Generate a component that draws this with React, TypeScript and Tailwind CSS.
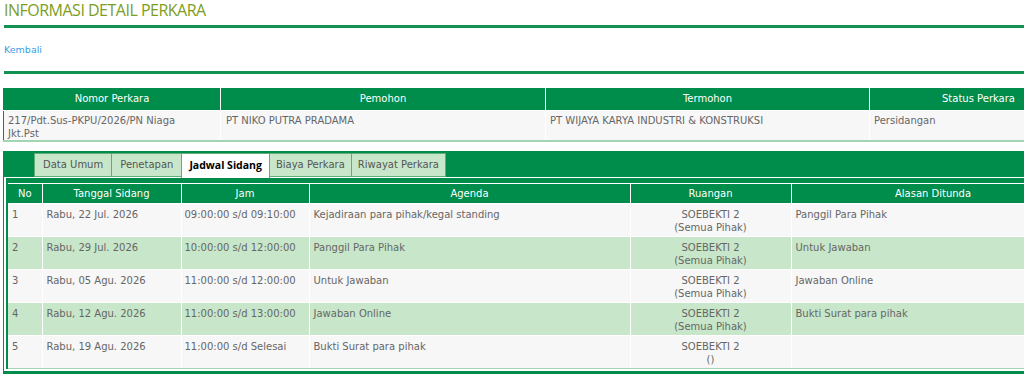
import React from "react";

const infoHeaders = ["Nomor Perkara", "Pemohon", "Termohon", "Status Perkara"];

const tabs = [
  { label: "Data Umum", active: false },
  { label: "Penetapan", active: false },
  { label: "Jadwal Sidang", active: true },
  { label: "Biaya Perkara", active: false },
  { label: "Riwayat Perkara", active: false },
];

const jadwal = [
  {
    no: "1",
    tanggal: "Rabu, 22 Jul. 2026",
    jam: "09:00:00 s/d 09:10:00",
    agenda: "Kejadiraan para pihak/kegal standing",
    ruang: "(Semua Pihak)",
    alasan: "Panggil Para Pihak",
  },
  {
    no: "2",
    tanggal: "Rabu, 29 Jul. 2026",
    jam: "10:00:00 s/d 12:00:00",
    agenda: "Panggil Para Pihak",
    ruang: "(Semua Pihak)",
    alasan: "Untuk Jawaban",
  },
  {
    no: "3",
    tanggal: "Rabu, 05 Agu. 2026",
    jam: "11:00:00 s/d 12:00:00",
    agenda: "Untuk Jawaban",
    ruang: "(Semua Pihak)",
    alasan: "Jawaban Online",
  },
  {
    no: "4",
    tanggal: "Rabu, 12 Agu. 2026",
    jam: "11:00:00 s/d 13:00:00",
    agenda: "Jawaban Online",
    ruang: "(Semua Pihak)",
    alasan: "Bukti Surat para pihak",
  },
  {
    no: "5",
    tanggal: "Rabu, 19 Agu. 2026",
    jam: "11:00:00 s/d Selesai",
    agenda: "Bukti Surat para pihak",
    ruang: "()",
    alasan: "",
  },
];

const App = () => {
  return (
    <div className="w-[1024px] h-[376px] overflow-hidden bg-white font-['DejaVu_Sans',sans-serif] text-[10px] text-[#666]">
      <div className="w-[1095px]">
        {/* Page title */}
        <h1 className="h-[20px] pl-[4px] font-['Open_Sans',sans-serif] text-[16px] leading-[20px] tracking-[-0.5px] text-[#7d9d1d]">
          INFORMASI DETAIL PERKARA
        </h1>
        <div className="mt-[5px] ml-[4px] h-[3px] bg-[#139150]" />

        <div className="mt-[16px] pl-[4px] text-[9.5px] leading-[12px] text-[#3c9ee5]">Kembali</div>
        <div className="mt-[15px] ml-[4px] h-[3px] bg-[#139150]" />

        {/* Ringkasan perkara */}
        <table className="mt-[14px] ml-[3px] w-[1084px] table-fixed border-l border-[#008c4a]">
          <colgroup>
            <col className="w-[217px]" />
            <col className="w-[325px]" />
            <col className="w-[324px]" />
            <col className="w-[218px]" />
          </colgroup>
          <thead>
            <tr className="bg-[#008c4a] text-white">
              {infoHeaders.map((h) => (
                <th key={h} className="h-[22px] border-r border-b border-white font-normal leading-[13px]">
                  {h}
                </th>
              ))}
            </tr>
          </thead>
          <tbody>
            <tr className="bg-[#f7f7f7] align-top">
              <td className="h-[30px] border-r border-white border-b-2 border-b-[#a0d6b3] px-[4px] pt-[3px] leading-[13px]">
                217/Pdt.Sus-PKPU/2026/PN Niaga
                <br />
                Jkt.Pst
              </td>
              <td className="border-r border-white border-b-2 border-b-[#a0d6b3] px-[5px] pt-[3px] leading-[13px]">
                PT NIKO PUTRA PRADAMA
              </td>
              <td className="border-r border-white border-b-2 border-b-[#a0d6b3] px-[4px] pt-[3px] leading-[13px]">
                PT WIJAYA KARYA INDUSTRI &amp; KONSTRUKSI
              </td>
              <td className="border-b-2 border-b-[#a0d6b3] px-[4px] pt-[3px] leading-[13px]">Persidangan</td>
            </tr>
          </tbody>
        </table>

        {/* Tab panel */}
        <div className="mt-[9px] ml-[3px] bg-[#008c4a] pl-[1px] pt-[2px] pb-[3px]">
          <div className="flex h-[24px] items-start pl-[31px]">
            {tabs.map((t) =>
              t.active ? (
                <div
                  key={t.label}
                  className="relative z-10 -ml-px flex h-[25px] items-center border border-b-0 border-[#5fae77] bg-white px-[7px] font-['Open_Sans',sans-serif] text-[10.5px] font-bold text-black"
                >
                  {t.label}
                </div>
              ) : (
                <div
                  key={t.label}
                  className={`-ml-px flex h-[24px] items-center border border-[#5fae77] bg-[#c8e6c9] text-[#555] ${
                    t.label === "Data Umum" || t.label === "Penetapan" ? "px-[8px]" : "px-[6px]"
                  }`}
                >
                  {t.label}
                </div>
              )
            )}
          </div>

          <div className="border-t border-l-2 border-b-2 border-white bg-[#008c4a] pl-[2px] pt-[5px]">
            <table className="w-[1067px] table-fixed border-t border-white">
              <colgroup>
                <col className="w-[34px]" />
                <col className="w-[139px]" />
                <col className="w-[128px]" />
                <col className="w-[321px]" />
                <col className="w-[161px]" />
                <col className="w-[284px]" />
              </colgroup>
              <thead>
                <tr className="text-white">
                  {["No", "Tanggal Sidang", "Jam", "Agenda", "Ruangan", "Alasan Ditunda"].map((h) => (
                    <th key={h} className="h-[20px] border-r border-b border-white font-normal leading-[13px]">
                      {h}
                    </th>
                  ))}
                </tr>
              </thead>
              <tbody>
                {jadwal.map((r, i) => {
                  const bg = i % 2 === 0 ? "bg-[#f7f7f7]" : "bg-[#c8e6c9]";
                  const last = i === jadwal.length - 1;
                  const bottom = last ? "border-b border-b-[#9fd5b2]" : "border-b border-white";
                  return (
                    <tr key={r.no} className={`${bg} align-top leading-[13px]`}>
                      <td className={`h-[33px] border-r border-white ${bottom} px-[4px] pt-[4px]`}>{r.no}</td>
                      <td className={`border-r border-white ${bottom} px-[4px] pt-[4px]`}>{r.tanggal}</td>
                      <td className={`border-r border-white ${bottom} px-[3px] pt-[4px]`}>{r.jam}</td>
                      <td className={`border-r border-white ${bottom} px-[4px] pt-[4px]`}>{r.agenda}</td>
                      <td className={`border-r border-white ${bottom} px-[4px] pt-[4px] text-center`}>
                        SOEBEKTI 2
                        <br />
                        {r.ruang}
                      </td>
                      <td className={`${bottom} px-[4px] pt-[4px]`}>{r.alasan}</td>
                    </tr>
                  );
                })}
              </tbody>
            </table>
          </div>
        </div>
      </div>
    </div>
  );
};

export default App;
